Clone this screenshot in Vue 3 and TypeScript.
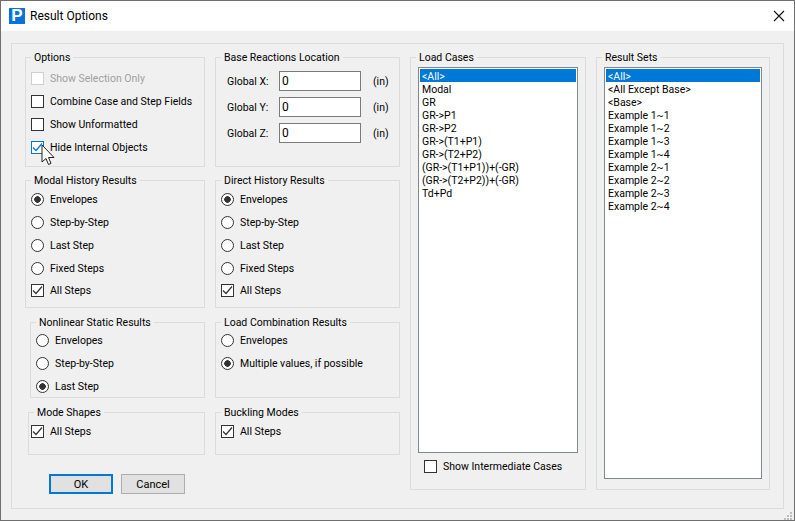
<script setup lang="ts">
interface Option {
  label: string;
  kind: "check" | "radio";
  on?: boolean;
  disabled?: boolean;
}

const radio = (label: string, on = false): Option => ({ label, kind: "radio", on });
const check = (label: string, on = false): Option => ({ label, kind: "check", on });

const options: Option[] = [
  { label: "Show Selection Only", kind: "check", disabled: true },
  check("Combine Case and Step Fields"),
  check("Show Unformatted"),
  check("Hide Internal Objects", true),
];
const history: Option[] = [
  radio("Envelopes", true),
  radio("Step-by-Step"),
  radio("Last Step"),
  radio("Fixed Steps"),
  check("All Steps", true),
];
const nonlinear: Option[] = [radio("Envelopes"), radio("Step-by-Step"), radio("Last Step", true)];
const combos: Option[] = [radio("Envelopes"), radio("Multiple values, if possible", true)];
const allSteps: Option[] = [check("All Steps", true)];

const axes = ["X", "Y", "Z"];
const loadCases = [
  "<All>",
  "Modal",
  "GR",
  "GR->P1",
  "GR->P2",
  "GR->(T1+P1)",
  "GR->(T2+P2)",
  "(GR->(T1+P1))+(-GR)",
  "(GR->(T2+P2))+(-GR)",
  "Td+Pd",
];
const resultSets = [
  "<All>",
  "<All Except Base>",
  "<Base>",
  "Example 1~1",
  "Example 1~2",
  "Example 1~3",
  "Example 1~4",
  "Example 2~1",
  "Example 2~2",
  "Example 2~3",
  "Example 2~4",
];

const groups = [
  { title: "Modal History Results", cls: "tall", items: history },
  { title: "Direct History Results", cls: "tall", items: history },
  { title: "Nonlinear Static Results", cls: "mid indent", items: nonlinear },
  { title: "Load Combination Results", cls: "mid", items: combos },
  { title: "Mode Shapes", cls: "short shifted", items: allSteps },
  { title: "Buckling Modes", cls: "short", items: allSteps },
];
</script>

<template>
  <div class="dialog">
    <header class="titlebar">
      <span class="app-icon">P</span>
      <span class="title">Result Options</span>
      <svg class="close" width="12" height="12" viewBox="0 0 12 12">
        <path d="M1 1 L11 11 M11 1 L1 11" stroke="#111" stroke-width="1.1" fill="none" />
      </svg>
    </header>

    <main class="body">
      <div class="panel">
        <div class="left">
          <div class="groups">
            <fieldset class="group first options">
              <legend>Options</legend>
              <label
                v-for="o in options"
                :key="o.label"
                class="row"
                :class="{ disabled: o.disabled, hot: o.on }"
              >
                <span class="box">
                  <svg v-if="o.on" width="11" height="11" viewBox="0 0 11 11">
                    <path d="M1 5.5 L4 8.5 L10 1.5" stroke="#0078d7" stroke-width="1.2" fill="none" />
                  </svg>
                </span>
                {{ o.label }}
              </label>
            </fieldset>

            <fieldset class="group first location">
              <legend>Base Reactions Location</legend>
              <div v-for="a in axes" :key="a" class="coord">
                <span class="coord-label">Global {{ a }}:</span>
                <span class="input">0</span>
                <span class="unit">(in)</span>
              </div>
            </fieldset>

            <fieldset v-for="g in groups" :key="g.title" class="group" :class="g.cls">
              <legend>{{ g.title }}</legend>
              <div v-for="o in g.items" :key="o.label" class="row">
                <span v-if="o.kind === 'radio'" class="radio" :class="{ on: o.on }"></span>
                <span v-else class="box">
                  <svg v-if="o.on" width="11" height="11" viewBox="0 0 11 11">
                    <path d="M1 5.5 L4 8.5 L10 1.5" stroke="#333" stroke-width="1.2" fill="none" />
                  </svg>
                </span>
                {{ o.label }}
              </div>
            </fieldset>
          </div>

          <div class="buttons">
            <button class="btn default">OK</button>
            <button class="btn">Cancel</button>
          </div>
        </div>

        <fieldset class="group side cases">
          <legend>Load Cases</legend>
          <ul class="list">
            <li v-for="(c, i) in loadCases" :key="c" :class="{ sel: i === 0 }">{{ c }}</li>
          </ul>
          <div class="row intermediate"><span class="box"></span>Show Intermediate Cases</div>
        </fieldset>

        <fieldset class="group side sets">
          <legend>Result Sets</legend>
          <ul class="list">
            <li v-for="(c, i) in resultSets" :key="c" :class="{ sel: i === 0 }">{{ c }}</li>
          </ul>
        </fieldset>
      </div>

      <svg class="grip" width="9" height="9" viewBox="0 0 9 9">
        <path d="M6 0h2v2H6zM3 3h2v2H3zM6 3h2v2H6zM0 6h2v2H0zM3 6h2v2H3zM6 6h2v2H6z" fill="#bdbdbd" />
      </svg>
    </main>

    <!-- mouse pointer sitting over the checkbox -->
    <svg class="pointer" width="14" height="22" viewBox="0 0 14 22">
      <path
        d="M1 1 V18 L5 14.5 L7.5 20.5 L10 19.4 L7.5 13.5 H13 Z"
        fill="#fff"
        stroke="#222"
        stroke-width="1"
      />
    </svg>
  </div>
</template>

<style scoped>
.dialog {
  position: relative;
  box-sizing: border-box;
  width: 795px;
  height: 521px;
  display: flex;
  flex-direction: column;
  border: 1px solid #6f6f6f;
  background: #f0f0f0;
  color: #000;
  font-family: Roboto, "Open Sans", sans-serif;
  font-size: 10.5px;
  overflow: hidden;
}
.titlebar {
  flex: none;
  height: 30px;
  display: flex;
  align-items: center;
  padding: 0 9px 0 8px;
  background: #fff;
}
.app-icon {
  width: 16px;
  height: 16px;
  margin-right: 5px;
  background: #0a72dc;
  color: #fff;
  font: bold 17px/16px "Liberation Sans", sans-serif;
  text-align: center;
}
.title {
  flex: 1;
  font-size: 12px;
}
.body {
  position: relative;
  flex: 1;
  padding: 12px 10px;
}
.panel {
  box-sizing: border-box;
  height: 466px;
  display: flex;
  align-items: flex-start;
  gap: 10px;
  padding: 6px 0 0 13px;
  border: 1px solid #dcdcdc;
}
.left {
  width: 375px;
}
.groups {
  display: grid;
  grid-template-columns: 180px 185px;
  justify-content: space-between;
  row-gap: 7px;
}
.group {
  box-sizing: border-box;
  margin: 0;
  padding: 0 0 0 5px;
  min-width: 0;
  border: 1px solid #dcdcdc;
}
.group legend {
  margin-left: 0;
  padding: 0 3px;
  line-height: 15px;
}
.first {
  height: 117px;
}
.options {
  padding-top: 2px;
}
.location {
  padding-top: 3px;
}
.tall {
  height: 135px;
  margin-top: -1px;
}
.tall .row:last-child {
  margin-top: -1px;
}
.mid {
  height: 83px;
}
.mid .row:first-of-type {
  margin-top: -1px;
}
.short {
  height: 50px;
}
.indent {
  margin-left: 5px;
}
.shifted {
  margin-left: 3px;
  padding-left: 2px;
}
.shifted legend {
  margin-left: 3px;
}
.row {
  height: 23px;
  display: flex;
  align-items: center;
  gap: 6px;
}
.disabled {
  color: #a0a0a0;
}
.disabled .box {
  border-color: #cfcfcf;
}
.box {
  box-sizing: border-box;
  flex: none;
  width: 13px;
  height: 13px;
  display: flex;
  align-items: center;
  justify-content: center;
  background: #fff;
  border: 1px solid #333;
}
.hot .box {
  border-color: #0078d7;
}
.radio {
  box-sizing: border-box;
  flex: none;
  width: 13px;
  height: 13px;
  border: 1px solid #333;
  border-radius: 50%;
  background: #fff;
}
.radio.on {
  background: radial-gradient(circle, #333 0 3px, #fff 3.5px);
}
.coord {
  height: 26px;
  display: flex;
  align-items: center;
}
.coord-label {
  width: 52px;
  padding-left: 6px;
}
.input {
  box-sizing: border-box;
  width: 82px;
  height: 20px;
  padding-left: 2px;
  line-height: 18px;
  font-size: 12px;
  background: #fff;
  border: 1px solid #7a7a7a;
}
.unit {
  margin-left: 12px;
}
.side {
  height: 440px;
  padding: 0 7px;
}
.side legend {
  margin-left: -2px;
}
.cases {
  width: 176px;
}
.sets {
  width: 174px;
}
.list {
  box-sizing: border-box;
  height: 386px;
  margin: 2px 0 0;
  padding: 1px;
  list-style: none;
  background: #fff;
  border: 1px solid #828790;
}
.sets .list {
  height: 412px;
}
.list li {
  height: 13px;
  padding-left: 2px;
  line-height: 15px;
  white-space: nowrap;
}
.list li.sel {
  background: #0078d7;
  color: #fff;
}
.intermediate {
  margin: 2px 0 0 6px;
}
.buttons {
  display: flex;
  gap: 8px;
  margin: 19px 0 0 24px;
}
.btn {
  box-sizing: border-box;
  width: 64px;
  height: 20px;
  padding: 0;
  font: inherit;
  font-size: 11px;
  color: #000;
  background: #e1e1e1;
  border: 1px solid #adadad;
}
.btn.default {
  border: 2px solid #0078d7;
}
.close {
  flex: none;
}
.grip {
  position: absolute;
  right: 1px;
  bottom: 0;
}
.pointer {
  position: absolute;
  left: 40px;
  top: 143px;
}
</style>
